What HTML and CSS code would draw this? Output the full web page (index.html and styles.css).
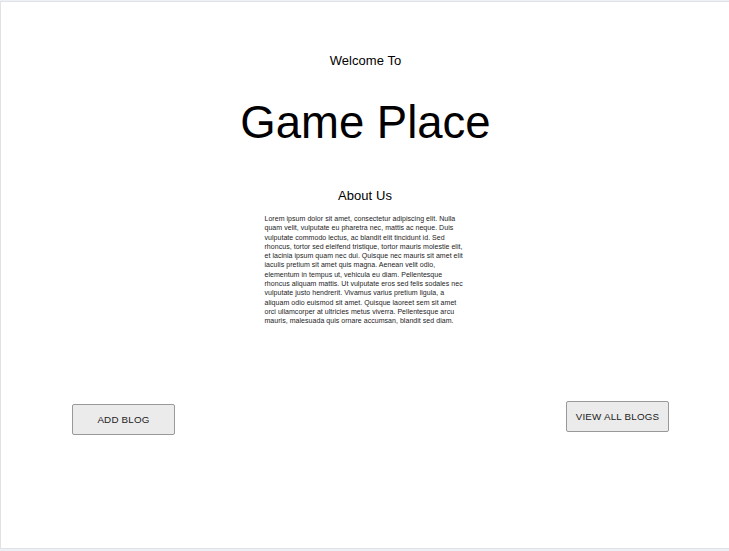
FILE: index.html
```
<!DOCTYPE html>
<html lang="en">
<head>
<meta charset="utf-8">
<title>Game Place</title>
<link rel="stylesheet" href="styles.css">
</head>
<body>
<main class="page">
  <p class="welcome">Welcome To</p>
  <h1 class="title">Game Place</h1>
  <h2 class="about-heading">About Us</h2>
  <p class="about">Lorem ipsum dolor sit amet, consectetur adipiscing elit. Nulla<br>quam velit, vulputate eu pharetra nec, mattis ac neque. Duis<br>vulputate commodo lectus, ac blandit elit tincidunt id. Sed<br>rhoncus, tortor sed eleifend tristique, tortor mauris molestie elit,<br>et lacinia ipsum quam nec dui. Quisque nec mauris sit amet elit<br>iaculis pretium sit amet quis magna. Aenean velit odio,<br>elementum in tempus ut, vehicula eu diam. Pellentesque<br>rhoncus aliquam mattis. Ut vulputate eros sed felis sodales nec<br>vulputate justo hendrerit. Vivamus varius pretium ligula, a<br>aliquam odio euismod sit amet. Quisque laoreet sem sit amet<br>orci ullamcorper at ultricies metus viverra. Pellentesque arcu<br>mauris, malesuada quis ornare accumsan, blandit sed diam.</p>
  <nav class="actions">
    <button class="button button-add">ADD BLOG</button>
    <button class="button">VIEW ALL BLOGS</button>
  </nav>
</main>
</body>
</html>
```
FILE: styles.css
```
* { box-sizing: border-box; }
body {
  margin: 0;
  height: 551px;
  padding: 1px 0 2px;
  background: #edf1f5;
  font-family: "Liberation Sans", Arial, sans-serif;
  color: #000;
  overflow: hidden;
}
.page {
  height: 548px;
  border: 1px solid #dfe2e6;
  border-right: 0;
  background: #fff;
  padding-top: 51px;
  display: flex;
  flex-direction: column;
  align-items: center;
}
.welcome, .about-heading {
  margin: 0;
  font-size: 13px;
  font-weight: 400;
  line-height: 16px;
  letter-spacing: 0.05px;
}
.welcome { padding-left: 1px; }
.title {
  margin: 27px 0 0;
  padding-left: 1px;
  font-size: 45.5px;
  font-weight: 400;
  line-height: 54px;
}
.about-heading { margin-top: 38px; }
.about {
  width: 201px;
  margin: 10px 0 0;
  font-size: 7px;
  line-height: 9.28px;
  letter-spacing: 0.04px;
  white-space: nowrap;
  color: #1c1c24;
}
.actions {
  align-self: stretch;
  display: flex;
  justify-content: space-between;
  margin: 76px 60px 0 71px;
}
.button {
  width: 103px;
  height: 31px;
  padding: 0;
  border: 1px solid #999;
  border-radius: 2px;
  background: #ebebeb;
  color: #222;
  font: 9.8px "Liberation Sans", Arial, sans-serif;
  letter-spacing: 0.2px;
}
.button-add { margin-top: 3px; }
```
